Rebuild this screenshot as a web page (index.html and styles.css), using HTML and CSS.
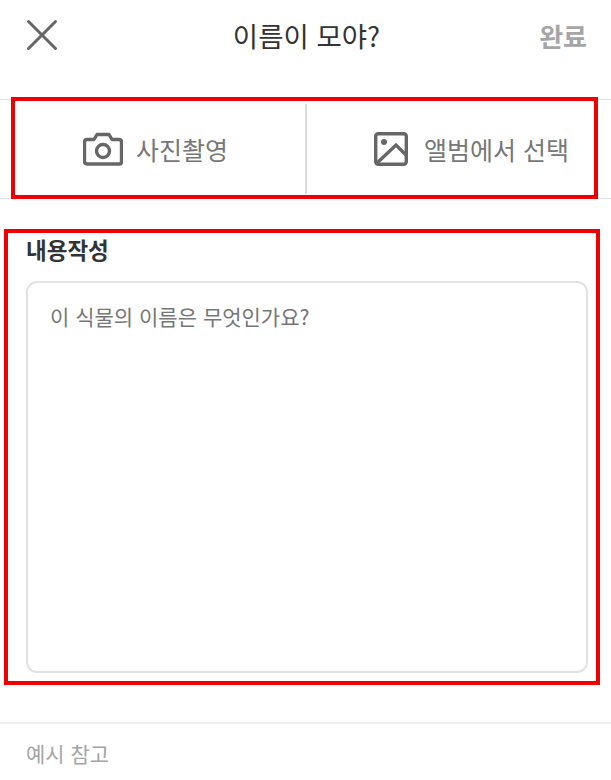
FILE: index.html
```html
<!DOCTYPE html>
<html lang="ko">
<head>
    <meta charset="UTF-8">
    <meta name="viewport" content="width=device-width, initial-scale=1.0">
    <title>이름이 모야?</title>
    <link rel="stylesheet" href="styles.css">
</head>
<body>
    <div class="page">
        <!-- 상단 바 -->
        <div class="top-bar">
            <svg class="close-icon" width="32" height="32" viewBox="0 0 32 32">
                <path d="M2.5 2.5L29.5 29.5M29.5 2.5L2.5 29.5" fill="none" stroke="#666" stroke-width="3" stroke-linecap="round"/>
            </svg>
            <div class="title">이름이 모야?</div>
            <div class="done">완료</div>
        </div>

        <!-- 사진 선택 -->
        <div class="photo-bar">
            <div class="photo-option option-camera">
                <svg width="40" height="34" viewBox="0 0 40 34">
                    <path d="M4 7.5H11L14 2.5H26L29 7.5H36Q38.5 7.5 38.5 10V29.5Q38.5 32 36 32H4Q1.5 32 1.5 29.5V10Q1.5 7.5 4 7.5Z" fill="none" stroke="#666" stroke-width="3.4" stroke-linejoin="round"/>
                    <circle cx="20" cy="19" r="6.5" fill="none" stroke="#666" stroke-width="3.4"/>
                </svg>
                <span>사진촬영</span>
            </div>
            <div class="photo-option option-album">
                <svg width="34" height="34" viewBox="0 0 34 34">
                    <rect x="1.7" y="1.7" width="30.6" height="30.6" rx="2.5" fill="none" stroke="#666" stroke-width="3.4"/>
                    <circle cx="10" cy="10" r="3" fill="#666"/>
                    <path d="M3 31L22 13L32 23" fill="none" stroke="#666" stroke-width="3.4"/>
                </svg>
                <span>앨범에서 선택</span>
            </div>
        </div>

        <!-- 내용 작성 -->
        <div class="content">
            <h2>내용작성</h2>
            <div class="text-box">이 식물의 이름은 무엇인가요?</div>
        </div>

        <div class="example">예시 참고</div>

        <!-- 강조 표시 -->
        <div class="mark mark-photo"></div>
        <div class="mark mark-content"></div>
    </div>
</body>
</html>
```

FILE: styles.css
```css
body {
    margin: 0;
    background-color: #ffffff;
    font-family: "Noto Sans CJK KR", "Noto Sans", sans-serif;
}

.page {
    position: relative;
    width: 611px;
    height: 780px;
    overflow: hidden;
}

.top-bar {
    display: flex;
    align-items: center;
    justify-content: space-between;
    height: 70px;
    padding: 0 24px 0 26px;
    margin-bottom: 29px;
    position: relative;
}

.close-icon {
    flex: none;
}

.title {
    position: absolute;
    left: 2px;
    right: 0;
    text-align: center;
    font-size: 27.5px;
    color: #333333;
}

.done {
    font-size: 26px;
    font-weight: 700;
    color: #a5a5a5;
}

.photo-bar {
    display: grid;
    grid-template-columns: 307px 304px;
    height: 90px;
    border-top: 1px solid #e2e2e2;
    border-bottom: 1px solid #e2e2e2;
    padding: 4px 0;
}

.photo-option {
    display: flex;
    align-items: center;
    font-size: 25px;
    color: #777777;
}

.option-camera {
    gap: 13px;
    padding-left: 83px;
    border-right: 2px solid #dcdcdc;
}

.option-album {
    justify-content: flex-end;
    gap: 16px;
    padding-right: 42px;
}

.content {
    padding: 34px 23px 0 26px;
}

.content h2 {
    margin: 0 0 16px 0;
    font-size: 22.5px;
    line-height: 32px;
    font-weight: 700;
    color: #333333;
}

.text-box {
    height: 392px;
    box-sizing: border-box;
    padding: 17px 22px;
    border: 2px solid #e2e2e2;
    border-radius: 11px;
    font-size: 21px;
    line-height: 32px;
    color: #777777;
}

.example {
    margin-top: 49px;
    padding: 13px 26px 0;
    border-top: 2px solid #eeeeee;
    font-size: 21px;
    line-height: 32px;
    color: #a5a5a5;
}

.mark {
    position: absolute;
    box-sizing: border-box;
    border: 4px solid #f00000;
}

.mark-photo {
    left: 11px;
    top: 97px;
    width: 587px;
    height: 102px;
}

.mark-content {
    left: 4px;
    top: 229px;
    width: 596px;
    height: 456px;
}
```
